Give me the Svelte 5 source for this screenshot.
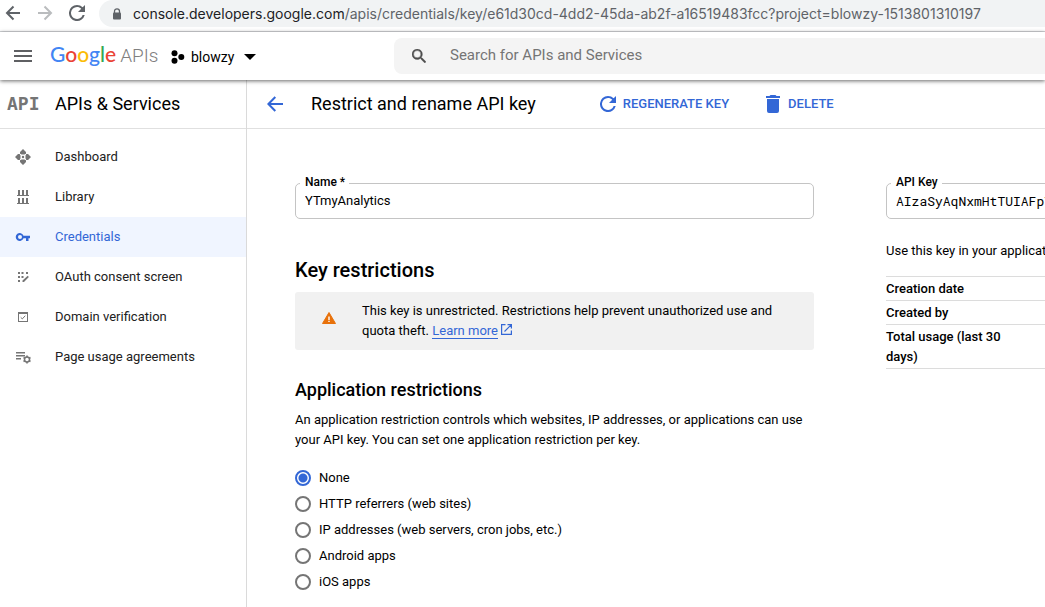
<script>
  const navItems = [
    { id: 'dashboard', label: 'Dashboard' },
    { id: 'library', label: 'Library' },
    { id: 'credentials', label: 'Credentials' },
    { id: 'consent', label: 'OAuth consent screen' },
    { id: 'domain', label: 'Domain verification' },
    { id: 'agreements', label: 'Page usage agreements' }
  ];

  const restrictions = [
    { id: 'none', label: 'None' },
    { id: 'http', label: 'HTTP referrers (web sites)' },
    { id: 'ip', label: 'IP addresses (web servers, cron jobs, etc.)' },
    { id: 'android', label: 'Android apps' },
    { id: 'ios', label: 'iOS apps' }
  ];

  const details = ['Creation date', 'Created by', 'Total usage (last 30 days)'];

  let activeItem = 'credentials';
  let restriction = 'none';
  let keyName = 'YTmyAnalytics';
  let apiKey = 'AIzaSyAqNxmHtTUIAFpY';
</script>

<div class="page">
  <div class="browser">
    <div class="browser__buttons">
      <button type="button" class="browser__button" aria-label="Back">
        <svg width="16" height="16" viewBox="0 0 16 16" fill="none" stroke="#5f6368" stroke-width="2"><path d="M15 8H2.5M8.500 1.500L2 8l6.500 6.500" /></svg>
      </button>
      <button type="button" class="browser__button" aria-label="Forward">
        <svg width="16" height="16" viewBox="0 0 16 16" fill="none" stroke="#babcbe" stroke-width="2"><path d="M1 8h12.500M7.500 1.500L14 8l-6.500 6.500" /></svg>
      </button>
      <button type="button" class="browser__button" aria-label="Reload">
        <svg width="16" height="16" viewBox="4 4 16 16" fill="#5f6368"><path d="M17.650 6.350A7.960 7.960 0 0 0 12 4a8 8 0 1 0 7.730 10h-2.080A6 6 0 1 1 12 6c1.660 0 3.140.69 4.220 1.780L13 11h7V4z" /></svg>
      </button>
    </div>
    <div class="omnibox">
      <svg width="10" height="12" viewBox="0 0 10 12"><path d="M2.500 5V3.300a2.500 2.500 0 0 1 5 0V5" fill="none" stroke="#5f6368" stroke-width="1.300" /><rect x="1" y="4.500" width="8" height="7" rx="1" fill="#5f6368" /></svg>
      <span class="omnibox__url"><b>console.developers.google.com</b>/apis/credentials/key/e61d30cd-4dd2-45da-ab2f-a16519483fcc?project=blowzy-1513801310197</span>
    </div>
  </div>

  <header class="header">
    <button type="button" class="header__menu" aria-label="Main menu">
      <svg width="18" height="12" viewBox="0 0 18 12" fill="#5f6063"><path d="M0 0h18v2H0zM0 5h18v2H0zM0 10h18v2H0z" /></svg>
    </button>
    <a class="logo" href="#home"><span class="logo__google"><span class="blue">G</span><span class="red">o</span><span class="yellow">o</span><span class="blue">g</span><span class="green">l</span><span class="red">e</span></span><span class="logo__apis">APIs</span></a>
    <button type="button" class="project">
      <svg width="14" height="14" viewBox="0 0 14 14"><circle cx="3.500" cy="3.200" r="3" /><circle cx="3.500" cy="10.800" r="3" /><circle cx="10.300" cy="7" r="3" /></svg>
      <span>blowzy</span>
      <svg width="12" height="6" viewBox="0 0 12 6"><path d="M0 0h12L6 6z" /></svg>
    </button>
    <div class="search">
      <svg width="14" height="14" viewBox="3 3 17.500 17.500" fill="#4d4d4d" stroke="#4d4d4d" stroke-width=".5"><path d="M15.500 14h-.79l-.28-.27A6.470 6.470 0 0 0 16 9.500 6.500 6.500 0 1 0 9.500 16c1.610 0 3.090-.59 4.230-1.570l.27.28v.79l5 4.990L20.490 19l-4.990-5zm-6 0a4.500 4.500 0 1 1 0-9 4.500 4.500 0 0 1 0 9z" /></svg>
      <input type="text" class="search__input" aria-label="Search for APIs and Services" placeholder="Search for APIs and Services" />
    </div>
  </header>

  <div class="body">
    <aside class="sidebar">
      <div class="sidebar__head">
        <span class="sidebar__logo">API</span>
        <h2 class="bar-title">APIs &amp; Services</h2>
      </div>
      <nav class="nav">
        {#each navItems as item (item.id)}
          <a href={`#${item.id}`} class="nav__item" class:nav__item--active={item.id === activeItem} on:click|preventDefault={() => (activeItem = item.id)}>
            <svg width="16" height="16" viewBox="0 0 16 16" fill="currentColor">
              {#if item.id === 'dashboard'}
                <path d="M8 0l3 3v1.500H9.500L8 3.500 6.500 4.500H5V3zM8 16l3-3v-1.500H9.500L8 12.500 6.500 11.500H5V13zM0 8l3-3h1.500v1.500L3.500 8l1 1.500V11H3zM16 8l-3-3h-1.500v1.500L12.500 8l-1 1.500V11H13z" />
                <path d="M5 3h6v1.500L9.500 5.500h-3L5 4.500zM5 13h6v-1.500l-1.500-1h-3l-1.500 1zM3 5v6h1.500l1-1.500v-3L4.500 5zM13 5v6h-1.500l-1-1.500v-3l1-1.500z" />
                <circle cx="8" cy="8" r="1.200" />
              {:else if item.id === 'library'}
                <path d="M3 1h2v5H3zM7 1h2v5H7zM11 1h2v5h-2zM2 6h12v1H2zM3 9h2v5H3zM7 9h2v5H7zM11 9h2v5h-2zM2 14h12v1H2z" />
              {:else if item.id === 'credentials'}
                <path d="M8.500 6.700a4 4 0 1 0 0 2.600H11V12h2.500V9.300H15V6.700zM5 10a2 2 0 1 1 0-4 2 2 0 0 1 0 4z" />
              {:else if item.id === 'consent'}
                <path d="M3 3h2v2H3zM6.500 3h2v2h-2zM11 3h2v2h-2zM3 7h2v2H3zM6.500 7h2v2h-2zM3 11h2v2H3zM12.700 6.700l1.200 1.200L9 13H7.500v-1.500z" />
              {:else if item.id === 'domain'}
                <path d="M3 3v10h10V3zM4 5h8v7H4z" fill-rule="evenodd" />
                <path d="M5.700 8.300l1.600 1.600 3-3.200" fill="none" stroke="currentColor" />
              {:else}
                <path d="M1 3h9v1.500H1zM1 6h9v1.500H1zM1 9h5v1.500H1z" />
                <circle cx="12" cy="10.500" r="2.500" fill="none" stroke="currentColor" stroke-width="1.500" />
                <path d="M12 6.500v1.500M12 13v1.500M8.500 8.500l1.300.7M14.200 11.800l1.300.7M8.500 12.500l1.300-.7M14.200 9.200l1.300-.7" stroke="currentColor" stroke-width="1.600" />
              {/if}
            </svg>
            <span>{item.label}</span>
          </a>
        {/each}
      </nav>
    </aside>

    <main class="main">
      <div class="toolbar">
        <button type="button" class="toolbar__back" aria-label="Go back">
          <svg width="16" height="16" viewBox="0 0 16 16" fill="none" stroke="#3367d6" stroke-width="2"><path d="M16 8H2M8.300 1L1.400 8l6.900 7" /></svg>
        </button>
        <h1 class="bar-title toolbar__title">Restrict and rename API key</h1>
        <button type="button" class="action">
          <svg width="16" height="16" viewBox="4 4 16 16" fill="#3367d6"><path d="M17.650 6.350A7.960 7.960 0 0 0 12 4a8 8 0 1 0 7.730 10h-2.080A6 6 0 1 1 12 6c1.660 0 3.140.69 4.220 1.780L13 11h7V4z" /></svg>
          <span>Regenerate key</span>
        </button>
        <button type="button" class="action">
          <svg width="16" height="18" viewBox="-1 0 16 18" fill="#3367d6"><path d="M1 4h12v12a2 2 0 0 1-2 2H3a2 2 0 0 1-2-2zM4.500 0h5l1 1H14v2H0V1h3.500z" /></svg>
          <span>Delete</span>
        </button>
      </div>

      <div class="content">
        <form class="form" on:submit|preventDefault>
          <div class="field">
            <label for="key-name" class="field__label">Name *</label>
            <input type="text" id="key-name" class="field__input" bind:value={keyName} required />
          </div>

          <h2 class="form__heading">Key restrictions</h2>
          <div class="notice">
            <svg class="notice__icon" width="14" height="12" viewBox="0 0 14 12"><path d="M7 .5L13.500 11.500H.5z" fill="#e8710a" stroke="#e8710a" stroke-linejoin="round" /><path d="M6.300 4.500h1.400v3.500H6.300zM6.300 8.800h1.400v1.300H6.300z" fill="#fff" /></svg>
            <p class="notice__text">This key is unrestricted. Restrictions help prevent unauthorized use and quota theft. <a href="#learn-more" class="link">Learn more</a><svg width="11" height="11" viewBox="0 0 11 11" fill="none" stroke="#3367d6" stroke-width="1.200"><path d="M4.500.6H.6v9.800h9.800V6.500M6.500.6h3.900v3.900M10.400.6L3.500 7.500" /></svg></p>
          </div>

          <h3 class="form__subheading" id="restriction-heading">Application restrictions</h3>
          <p class="form__text">An application restriction controls which websites, IP addresses, or applications can use your API key. You can set one application restriction per key.</p>
          <div class="radios" role="radiogroup" aria-labelledby="restriction-heading">
            {#each restrictions as option (option.id)}
              <label class="radio">
                <input type="radio" name="restriction" class="radio__input" value={option.id} bind:group={restriction} />
                <span>{option.label}</span>
              </label>
            {/each}
          </div>
        </form>

        <section class="info">
          <div class="field">
            <label for="api-key" class="field__label">API Key</label>
            <input type="text" id="api-key" class="field__input field__input--mono" value={apiKey} readonly />
          </div>
          <p class="info__hint">Use this key in your application</p>
          <table class="details">
            <tbody>
              {#each details as detail}
                <tr>
                  <th scope="row">{detail}</th>
                  <td></td>
                </tr>
              {/each}
            </tbody>
          </table>
        </section>
      </div>
    </main>
  </div>
</div>

<style>
  :global(body) {
    margin: 0;
    background: #fff;
  }

  .page {
    display: flex;
    flex-direction: column;
    min-height: 100vh;
    overflow: hidden;
    font-family: Roboto, "Liberation Sans", sans-serif;
    font-size: 13px;
    line-height: 20px;
    color: #000;
  }

  .page svg {
    display: block;
    flex: none;
  }

  h1, h2, h3, p {
    margin: 0;
  }

  button {
    display: flex;
    align-items: center;
    padding: 0;
    border: none;
    background: none;
    font: inherit;
    color: inherit;
    cursor: pointer;
  }

  input {
    box-sizing: border-box;
    font: inherit;
    color: inherit;
  }

  .browser {
    display: flex;
    align-items: flex-start;
    gap: 14px;
    height: 31px;
    padding-left: 5px;
    border-bottom: 1px solid #d6d8db;
  }

  .browser__buttons {
    display: flex;
    gap: 16px;
  }

  .browser__button {
    height: 26px;
  }

  .omnibox {
    display: flex;
    flex: 1;
    align-items: center;
    gap: 11px;
    min-width: 0;
    height: 27px;
    padding-left: 13px;
    border-radius: 14px 0 0 14px;
    background: #f1f3f4;
  }

  .omnibox__url {
    overflow: hidden;
    font-family: Inter, Roboto, sans-serif;
    font-size: 14px;
    color: #5f6368;
    white-space: nowrap;
  }

  .omnibox__url b {
    font-weight: 400;
    color: #202124;
  }

  .header {
    position: relative;
    display: flex;
    align-items: center;
    height: 48px;
    padding-left: 14px;
    box-shadow: 0 1px 4px rgba(0, 0, 0, 0.6);
  }

  .header__menu {
    margin-right: 18px;
  }

  .logo {
    display: flex;
    flex: none;
    align-items: baseline;
    gap: 4px;
    width: 121px;
    padding-bottom: 2px;
    font-size: 19px;
    line-height: 24px;
    text-decoration: none;
  }

  .logo__google {
    font-family: Lato, sans-serif;
    font-size: 21px;
    font-weight: 500;
  }

  .logo__apis {
    font-weight: 300;
    color: #808080;
  }

  .blue { color: #4285f4; }
  .red { color: #ea4335; }
  .yellow { color: #fbbc05; }
  .green { color: #34a853; }

  .project {
    gap: 6px;
    padding-top: 2px;
    font-size: 14px;
  }

  .project span {
    margin-right: 4px;
  }

  .search {
    display: flex;
    flex: 1;
    align-items: center;
    gap: 24px;
    height: 36px;
    margin-left: auto;
    max-width: 651px;
    padding-left: 18px;
    border-radius: 8px 0 0 8px;
    background: #f4f4f4;
    box-sizing: border-box;
  }

  .search__input {
    flex: 1;
    min-width: 0;
    padding: 0 0 2px;
    border: none;
    outline: none;
    background: none;
    font-size: 15px;
  }

  .search__input::placeholder {
    color: #757575;
    opacity: 1;
  }

  .body {
    display: flex;
    flex: 1;
  }

  .sidebar {
    flex: none;
    width: 246px;
    border-right: 1px solid #dadada;
  }

  .sidebar__head, .toolbar {
    display: flex;
    align-items: center;
    height: 48px;
    border-bottom: 1px solid #e0e0e0;
  }

  .sidebar__logo {
    flex: none;
    width: 55px;
    padding-left: 7px;
    box-sizing: border-box;
    font-family: "DejaVu Sans Mono", monospace;
    font-size: 18px;
    font-weight: 700;
    color: #757575;
  }

  .bar-title {
    font-size: 18px;
    font-weight: 400;
    line-height: 24px;
    white-space: nowrap;
  }

  .nav {
    padding-top: 8px;
  }

  .nav__item {
    display: flex;
    align-items: center;
    gap: 24px;
    height: 40px;
    padding-left: 15px;
    color: #212121;
    text-decoration: none;
  }

  .nav__item svg {
    color: #757575;
  }

  .nav__item--active {
    background: #f0f5ff;
  }

  .nav__item--active, .nav__item--active svg {
    color: #3367d6;
  }

  .main {
    flex: 1;
    min-width: 0;
  }

  .toolbar {
    padding-left: 20px;
  }

  .toolbar__back {
    margin-right: 28px;
  }

  .toolbar__title {
    margin-right: 64px;
  }

  .action {
    gap: 7px;
    margin-right: 36px;
    font-weight: 500;
    color: #3367d6;
    text-transform: uppercase;
    white-space: nowrap;
  }

  .content {
    display: grid;
    grid-template-columns: minmax(0, 519px) 320px;
    gap: 72px;
    width: 911px;
    padding: 54px 0 16px 48px;
  }

  .field {
    position: relative;
  }

  .field__label {
    position: absolute;
    top: -8px;
    left: 5px;
    padding: 0 4px 0 5px;
    background: #fff;
    font-size: 12px;
    font-weight: 500;
    line-height: 14px;
  }

  .field__input {
    display: block;
    width: 100%;
    height: 36px;
    padding: 0 9px 2px;
    border: 1px solid #c4c4c4;
    border-radius: 5px;
    outline: none;
    background: none;
  }

  .field__input--mono {
    padding-bottom: 0;
    font-family: "Roboto Mono", "DejaVu Sans Mono", monospace;
  }

  .form__heading {
    margin: 39px 0 10px;
    font-size: 20px;
    font-weight: 500;
    line-height: 24px;
  }

  .notice {
    display: flex;
    align-items: flex-start;
    gap: 26px;
    padding: 9px 27px;
    border-radius: 3px;
    background: #f1f1f1;
  }

  .notice__icon {
    margin-top: 11px;
  }

  .link {
    border-bottom: 1px solid #3367d6;
    color: #3367d6;
    text-decoration: none;
    white-space: nowrap;
  }

  .page .notice__text svg {
    display: inline-block;
    margin-left: 3px;
  }

  .form__subheading {
    margin: 28px 0 8px;
    font-size: 18px;
    font-weight: 500;
    line-height: 24px;
  }

  .radios {
    display: flex;
    flex-direction: column;
    gap: 6px;
    margin-top: 18px;
  }

  .radio {
    display: flex;
    align-items: center;
    gap: 8px;
  }

  .radio__input {
    width: 16px;
    height: 16px;
    margin: 0;
    border: 2px solid #757575;
    border-radius: 50%;
    appearance: none;
  }

  .radio__input:checked {
    border-color: #3367d6;
    background: radial-gradient(circle, #3367d6 0 4px, #fff 5px);
  }

  .info__hint {
    margin: 22px 0 15px;
    white-space: nowrap;
  }

  .details {
    width: 100%;
    border-top: 1px solid #dcdcdc;
    border-spacing: 0;
  }

  .details th {
    width: 130px;
    padding: 2px 0 1px;
    font-weight: 500;
    text-align: left;
  }

  .details th, .details td {
    border-bottom: 1px solid #dcdcdc;
  }
</style>
